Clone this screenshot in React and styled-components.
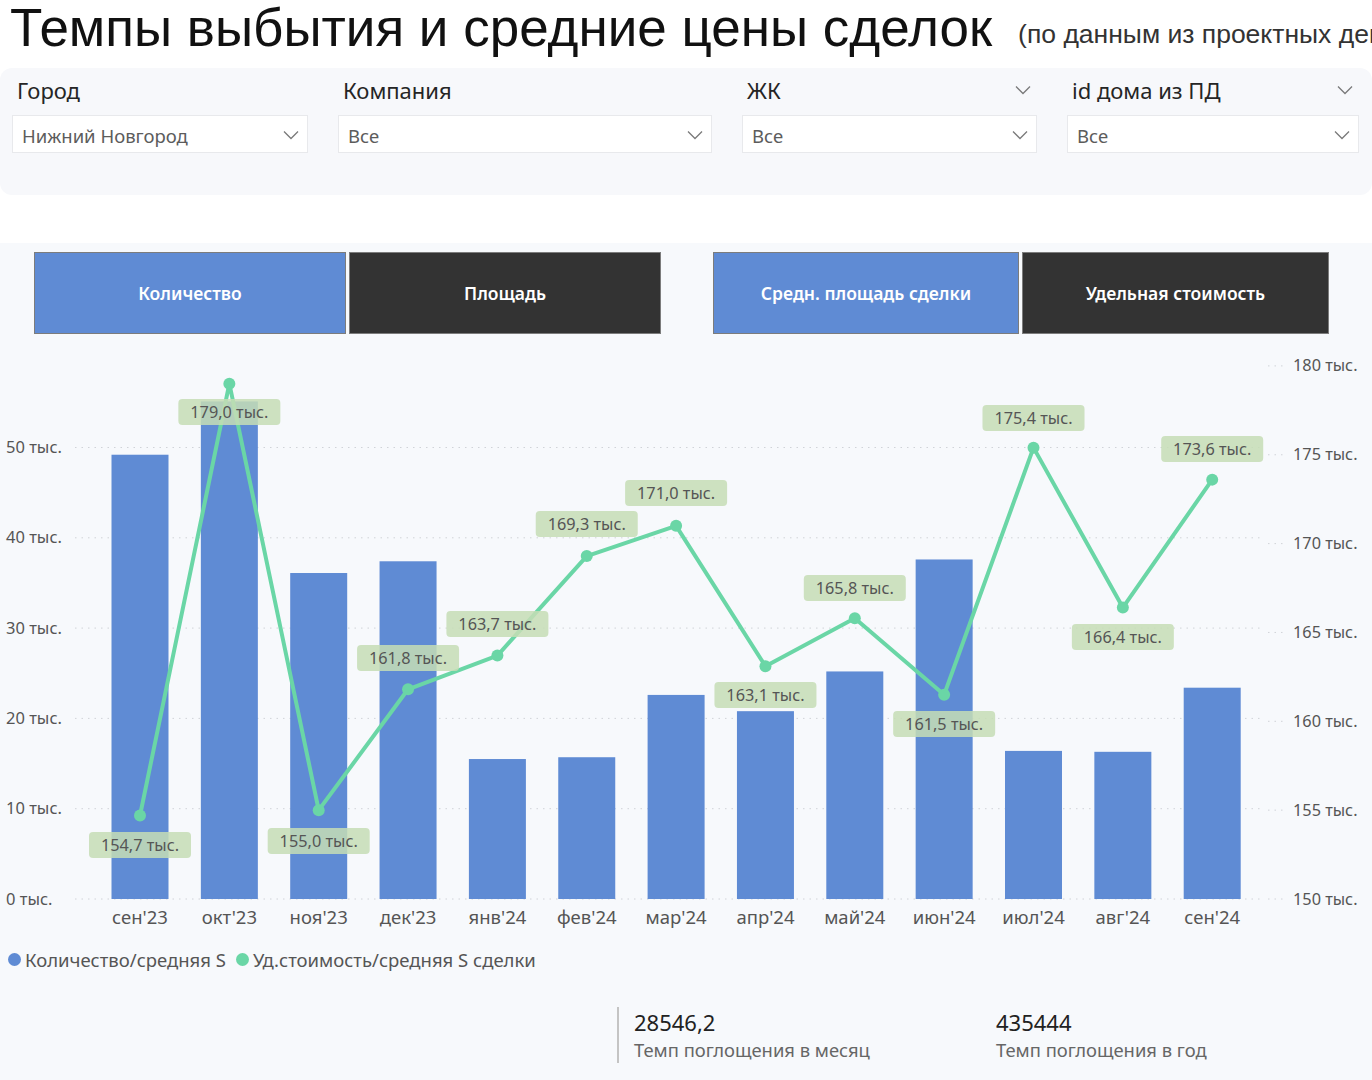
import React from "react";
import styled, { createGlobalStyle } from "styled-components";

const GlobalStyle = createGlobalStyle`
	html, body {
		margin: 0;
		padding: 0;
		background: #ffffff;
	}
	body {
		font-family: "Noto Sans", "Liberation Sans", sans-serif;
		overflow: hidden;
	}
`;

const Page = styled.div`
	width: 1372px;
	height: 1080px;
	overflow: hidden;
`;

const Header = styled.div`
	height: 68px;
	display: flex;
	align-items: baseline;
	padding: 0 0 0 10px;
	white-space: nowrap;
	overflow: hidden;
`;

const Title = styled.h1`
	margin: 0;
	font-family: "Liberation Sans", Arial, sans-serif;
	font-weight: 400;
	font-size: 53px;
	line-height: 56px;
	color: #111;
`;

const Subtitle = styled.span`
	margin-left: 26px;
	position: relative;
	top: -3px;
	font-family: "Liberation Sans", Arial, sans-serif;
	font-size: 26.5px;
	color: #333;
`;

const FilterPanel = styled.div`
	background: #f7f8fb;
	border-radius: 12px;
	padding: 8px 0 42px 12px;
	display: grid;
	grid-template-columns: 296px 374px 295px 292px;
	column-gap: 30px;
`;

const FilterColumn = styled.div`
	display: flex;
	flex-direction: column;
`;

const FilterLabelRow = styled.div`
	height: 28px;
	display: flex;
	align-items: center;
	justify-content: space-between;
	padding: 0 6px 0 5px;
	margin-bottom: 11px;
`;

const FilterLabel = styled.span`
	font-size: 22px;
	color: #252525;
`;

const Dropdown = styled.div`
	height: 38px;
	box-sizing: border-box;
	background: #ffffff;
	border: 1px solid #e8e9ec;
	display: flex;
	align-items: center;
	justify-content: space-between;
	padding: 2px 8px 0 9px;
`;

const DropdownValue = styled.span`
	font-size: 18.5px;
	color: #5c5c5c;
`;

const ChartPanel = styled.div`
	margin-top: 48px;
	height: 837px;
	background: #f7f9fc;
	display: flex;
	flex-direction: column;
`;

const ButtonsRow = styled.div`
	display: flex;
	padding: 9px 0 0 34px;
	gap: 52px;
`;

const ButtonGroup = styled.div`
	display: flex;
	gap: 3px;
`;

const ToggleButton = styled.div`
	width: ${(p) => p.$w}px;
	height: 82px;
	box-sizing: border-box;
	background: ${(p) => (p.$active ? "#5f8bd4" : "#333333")};
	border: 1px solid #7c7c7c;
	color: #ffffff;
	font-size: 17.5px;
	font-weight: 600;
	display: flex;
	align-items: center;
	justify-content: center;
`;

const ChartSvg = styled.svg`
	display: block;
	width: 1372px;
	height: 606px;
	font-family: "Noto Sans", "Liberation Sans", sans-serif;
`;

const Legend = styled.div`
	display: flex;
	align-items: center;
	margin-top: 9px;
	padding-left: 8px;
	height: 20px;
	gap: 10px;
`;

const LegendItem = styled.div`
	display: flex;
	align-items: center;
	gap: 4px;
	font-size: 18.5px;
	color: #555;
`;

const Dot = styled.span`
	width: 13px;
	height: 13px;
	border-radius: 50%;
	background: ${(p) => p.$color};
`;

const KpiRow = styled.div`
	display: flex;
	margin-top: 38px;
	padding-left: 617px;
`;

const Kpi = styled.div`
	width: ${(p) => p.$w}px;
	box-sizing: border-box;
	padding-left: ${(p) => (p.$bordered ? 15 : 0)}px;
	border-left: ${(p) => (p.$bordered ? "2px solid #c4c4c4" : "none")};
	display: flex;
	flex-direction: column;
`;

const KpiValue = styled.span`
	font-size: 22px;
	line-height: 30px;
	color: #222;
`;

const KpiLabel = styled.span`
	font-size: 18.4px;
	line-height: 26px;
	color: #666;
`;

const Chevron = ({ color = "#7a7a7a" }) => (
	<svg width="16" height="10" viewBox="0 0 16 10">
		<path d="M1 1.5 L8 8.5 L15 1.5" fill="none" stroke={color} strokeWidth="1.3" />
	</svg>
);

const filters = [
	{ label: "Город", value: "Нижний Новгород", labelChevron: false },
	{ label: "Компания", value: "Все", labelChevron: false },
	{ label: "ЖК", value: "Все", labelChevron: true },
	{ label: "id дома из ПД", value: "Все", labelChevron: true },
];

const data = [
	{ m: "сен'23", q: 49.2, p: 154.7, ly: 845 },
	{ m: "окт'23", q: 55.1, p: 179.0, ly: 412 },
	{ m: "ноя'23", q: 36.1, p: 155.0, ly: 841 },
	{ m: "дек'23", q: 37.4, p: 161.8, ly: 658 },
	{ m: "янв'24", q: 15.5, p: 163.7, ly: 624 },
	{ m: "фев'24", q: 15.7, p: 169.3, ly: 524 },
	{ m: "мар'24", q: 22.6, p: 171.0, ly: 493 },
	{ m: "апр'24", q: 20.8, p: 163.1, ly: 695 },
	{ m: "май'24", q: 25.2, p: 165.8, ly: 588 },
	{ m: "июн'24", q: 37.6, p: 161.5, ly: 724 },
	{ m: "июл'24", q: 16.4, p: 175.4, ly: 418 },
	{ m: "авг'24", q: 16.3, p: 166.4, ly: 637 },
	{ m: "сен'24", q: 23.4, p: 173.6, ly: 449 },
];

const OFF = 334;
const leftY = (v) => 899 - v * 9.03 - OFF;
const rightY = (p) => 899 - (p - 150) * 17.77 - OFF;
const xAt = (i) => 140 + i * 89.35;
const fmt = (p) => p.toFixed(1).replace(".", ",") + " тыс.";

const Chart = () => {
	const points = data.map((d, i) => `${xAt(i)},${rightY(d.p)}`).join(" ");
	return (
		<ChartSvg viewBox="0 0 1372 606">
			{[0, 10, 20, 30, 40, 50].map((v) => (
				<g key={"l" + v}>
					<line x1="75" x2="1262" y1={leftY(v)} y2={leftY(v)} stroke="#d0d3d8" strokeDasharray="1.5 5" />
					<text x="6" y={leftY(v) + 5.5} fontSize="16.5" fill="#555">
						{v} тыс.
					</text>
				</g>
			))}
			{[150, 155, 160, 165, 170, 175, 180].map((p) => (
				<g key={"r" + p}>
					<line x1="1268" x2="1284" y1={rightY(p)} y2={rightY(p)} stroke="#d0d3d8" strokeDasharray="1.5 5" />
					<text x="1293" y={rightY(p) + 5.5} fontSize="16.3" fill="#555">
						{p} тыс.
					</text>
				</g>
			))}
			{data.map((d, i) => (
				<rect
					key={"b" + i}
					x={xAt(i) - 28.5}
					y={leftY(d.q)}
					width="57"
					height={leftY(0) - leftY(d.q)}
					fill="#5f8bd4"
				/>
			))}
			{data.map((d, i) => (
				<text key={"x" + i} x={xAt(i)} y={924 - OFF} fontSize="18.5" fill="#555" textAnchor="middle">
					{d.m}
				</text>
			))}
			<polyline points={points} fill="none" stroke="#6ad6a6" strokeWidth="4" strokeLinejoin="round" />
			{data.map((d, i) => (
				<circle key={"c" + i} cx={xAt(i)} cy={rightY(d.p)} r="6" fill="#6ad6a6" />
			))}
			{data.map((d, i) => (
				<g key={"t" + i}>
					<rect
						x={xAt(i) - 51}
						y={d.ly - OFF - 13}
						width="102"
						height="26"
						rx="4"
						fill="#c6ddb5"
						fillOpacity="0.85"
					/>
					<text x={xAt(i)} y={d.ly - OFF + 5.5} fontSize="16.3" fill="#555" textAnchor="middle">
						{fmt(d.p)}
					</text>
				</g>
			))}
		</ChartSvg>
	);
};

export default function App() {
	return (
		<Page>
			<GlobalStyle />
			<Header>
				<Title>Темпы выбытия и средние цены сделок</Title>
				<Subtitle>(по данным из проектных деклараций)</Subtitle>
			</Header>
			<FilterPanel>
				{filters.map((f) => (
					<FilterColumn key={f.label}>
						<FilterLabelRow>
							<FilterLabel>{f.label}</FilterLabel>
							{f.labelChevron && <Chevron />}
						</FilterLabelRow>
						<Dropdown>
							<DropdownValue>{f.value}</DropdownValue>
							<Chevron />
						</Dropdown>
					</FilterColumn>
				))}
			</FilterPanel>
			<ChartPanel>
				<ButtonsRow>
					<ButtonGroup>
						<ToggleButton $w={312} $active>Количество</ToggleButton>
						<ToggleButton $w={312}>Площадь</ToggleButton>
					</ButtonGroup>
					<ButtonGroup>
						<ToggleButton $w={306} $active>Средн. площадь сделки</ToggleButton>
						<ToggleButton $w={307}>Удельная стоимость</ToggleButton>
					</ButtonGroup>
				</ButtonsRow>
				<Chart />
				<Legend>
					<LegendItem>
						<Dot $color="#5f8bd4" />
						Количество/средняя S
					</LegendItem>
					<LegendItem>
						<Dot $color="#6ad6a6" />
						Уд.стоимость/средняя S сделки
					</LegendItem>
				</Legend>
				<KpiRow>
					<Kpi $w={379} $bordered>
						<KpiValue>28546,2</KpiValue>
						<KpiLabel>Темп поглощения в месяц</KpiLabel>
					</Kpi>
					<Kpi $w={300}>
						<KpiValue>435444</KpiValue>
						<KpiLabel>Темп поглощения в год</KpiLabel>
					</Kpi>
				</KpiRow>
			</ChartPanel>
		</Page>
	);
}
